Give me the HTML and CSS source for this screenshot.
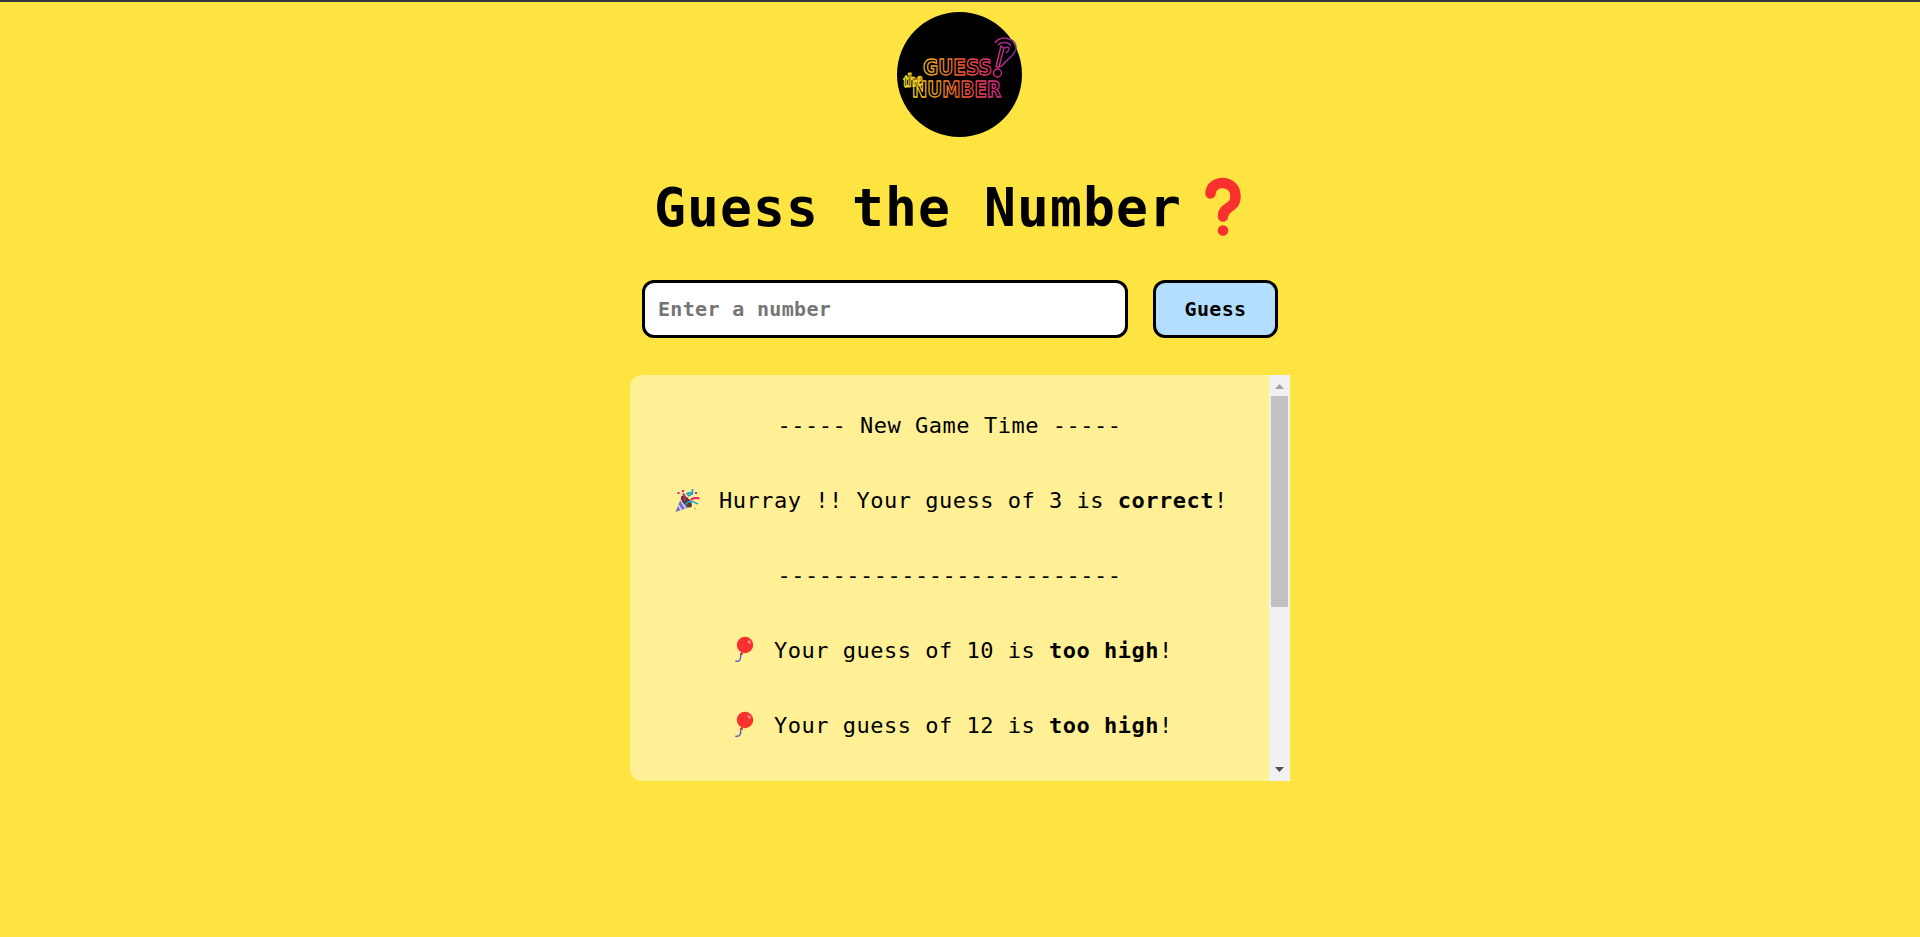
FILE: index.html
```html
<!DOCTYPE html>
<html lang="en">
<head>
<meta charset="utf-8">
<title>Guess the Number</title>
<link rel="stylesheet" href="styles.css">
</head>
<body>
<svg class="defs" width="0" height="0" aria-hidden="true">
  <symbol id="balloon" viewBox="0 0 34 28">
    <path d="M15 17.5C14.500 19 14.700 21 14.500 22.500C14.200 24.800 12 25.600 9.300 25.200" fill="none" stroke="#5b64c8" stroke-width="1.5"/>
    <path d="M16 15.5l-2.3 2.7 3.4.6z" fill="#d3202e"/>
    <circle cx="19" cy="9" r="8.2" fill="#f8312f"/>
    <ellipse cx="23.2" cy="6" rx="1.3" ry="2" transform="rotate(-35 23.2 6)" fill="#ff8a8c"/>
  </symbol>
</svg>
<main class="page">
  <svg class="logo" viewBox="0 0 125 125" role="img" aria-label="Guess the Number">
    <defs>
      <linearGradient id="neon" gradientUnits="userSpaceOnUse" x1="8" y1="0" x2="120" y2="0">
        <stop offset="0" stop-color="#f2e526"/>
        <stop offset=".22" stop-color="#eeaa1c"/>
        <stop offset=".5" stop-color="#ee582e"/>
        <stop offset=".8" stop-color="#dc2c80"/>
        <stop offset="1" stop-color="#7028a0"/>
      </linearGradient>
    </defs>
    <circle cx="62.5" cy="62.5" r="62.5" fill="#000"/>
    <g class="neon">
      <text class="neon-word" x="26" y="63" textLength="69" lengthAdjust="spacingAndGlyphs">GUESS</text>
      <text class="neon-word" x="15" y="84.500" textLength="89" lengthAdjust="spacingAndGlyphs">NUMBER</text>
      <text class="neon-the" x="7" y="75" textLength="19" lengthAdjust="spacingAndGlyphs" transform="rotate(-6 8 74)">the</text>
      <path d="M98 31C101 26 107 25 112 27C119 29 121 36 117 41C113 47 107 50 105 54L102 55L107 36L111 35C113 36 112 39 109 41M101 33C105 29 112 30 114 34M99 55L104 34L107 36M99 55L102 55"/>
      <circle cx="100.500" cy="61" r="4"/>
    </g>
  </svg>
  <h1 class="title"><span class="title-text">Guess the Number</span><svg class="title-mark" viewBox="0 0 82 60" aria-hidden="true">
    <path d="M28.500 16.500C29 2.500 53.500 1.500 53.500 19.500C53.500 32 41 29 41 39.500" fill="none" stroke="#f8312f" stroke-width="10.500" stroke-linecap="round" stroke-linejoin="round"/>
    <circle cx="41" cy="53.500" r="5.300" fill="#f8312f"/>
  </svg></h1>
  <form class="guess-form">
    <input class="guess-input" type="text" placeholder="Enter a number">
    <button class="guess-button" type="button">Guess</button>
  </form>
  <section class="log">
    <div class="log-list">
      <p class="entry">----- New Game Time -----</p>
      <p class="entry"><svg class="emoji" viewBox="0 0 34 28" aria-hidden="true">
        <path d="M11 9.500L4.500 26L20.500 20.500C19 15 15.500 11 11 9.500z" fill="#7b6bc0"/>
        <path d="M9.500 13.500L15 23M7.200 19L10.700 24.500" stroke="#d9cdf0" stroke-width="1.700"/>
        <ellipse cx="15.500" cy="15.500" rx="3.500" ry="7.300" transform="rotate(-41 15.500 15.500)" fill="#5d3a35"/>
        <path d="M12 7.500C14 9 14.500 12 13 14.500M20 14.500C21 11 25 12 28.500 12.500" fill="none" stroke="#e51a74" stroke-width="2"/>
        <path d="M15.500 8.500C17 6 21 6.500 19.500 9C18 10.500 16 9.500 18 8M21.500 3V7.500C21 9 19 8 20 6M14.500 19C17 14 22 15 27 18" fill="none" stroke="#16a6d0" stroke-width="1.700"/>
        <path d="M6.500 6h2v2h-2zM11 4h2v2h-2zM24 6h2v2h-2z" fill="#e51a74"/>
        <circle cx="24" cy="22.500" r="1" fill="#f5b04a"/>
      </svg> Hurray !! Your guess of 3 is <b>correct</b>!</p>
      <p class="entry">-------------------------</p>
      <p class="entry"><svg class="emoji" aria-hidden="true"><use href="#balloon"/></svg> Your guess of 10 is <b>too high</b>!</p>
      <p class="entry"><svg class="emoji" aria-hidden="true"><use href="#balloon"/></svg> Your guess of 12 is <b>too high</b>!</p>
    </div>
    <div class="scrollbar" aria-hidden="true">
      <svg class="arrow" viewBox="0 0 21 21"><path d="M6 14L10.500 9L15 14z" fill="#a3a3a3"/></svg>
      <div class="track"><div class="thumb"></div></div>
      <svg class="arrow" viewBox="0 0 21 21"><path d="M6 7L10.500 12L15 7z" fill="#505050"/></svg>
    </div>
  </section>
</main>
</body>
</html>
```
FILE: styles.css
```css
* { box-sizing: border-box; }

body {
  margin: 0;
  height: 937px;
  overflow: hidden;
  border-top: 2px solid #33343f;
  background: #fee440;
  color: #000;
  font-family: "DejaVu Sans Mono", monospace;
}

.defs { display: none; }

.page {
  display: flex;
  flex-direction: column;
  align-items: center;
  padding-top: 10px;
}

.logo { width: 125px; height: 125px; margin-right: 1px; }

.neon {
  fill: none;
  stroke: url(#neon);
  stroke-width: 1.4;
}
.neon-word { font: bold 21px "DejaVu Sans", sans-serif; }
.neon-the { font: italic bold 19px "Liberation Serif", serif; }

.title {
  display: flex;
  align-items: flex-start;
  height: 70px;
  margin: 36px 2px 0 0;
  font-size: 53px;
  line-height: 70px;
  font-weight: 700;
}
.title-text {
  width: 528px;
  letter-spacing: 1.09px;
  white-space: nowrap;
}
.title-mark { width: 82px; height: 60px; margin-top: 4px; }

.guess-form {
  display: flex;
  gap: 25px;
  margin-top: 37px;
}
.guess-input,
.guess-button {
  height: 58px;
  border: 3px solid #000;
  border-radius: 12px;
  font: bold 20px "DejaVu Sans Mono", monospace;
  letter-spacing: 0.33px;
}
.guess-input {
  width: 486px;
  padding: 0 13px;
  background: #fff;
}
.guess-input::placeholder { color: #757575; }
.guess-button {
  width: 125px;
  padding: 0;
  background: #b3deff;
  color: #000;
}

.log {
  display: flex;
  width: 660px;
  height: 406px;
  margin-top: 37px;
}
.log-list {
  flex: 1;
  overflow: hidden;
  padding-top: 13px;
  border-radius: 12px 0 0 12px;
  background: #fff095;
}
.entry {
  height: 75px;
  margin: 0;
  font-size: 22px;
  line-height: 75px;
  letter-spacing: 0.506px;
  text-align: center;
  white-space: nowrap;
}
.emoji { width: 34px; height: 28px; vertical-align: -6px; }

.scrollbar {
  display: flex;
  flex-direction: column;
  width: 21px;
  background: #f1f1f1;
}
.arrow { width: 21px; height: 21px; }
.track { flex: 1; padding: 0 2px; }
.thumb { height: 211px; background: #c1c1c1; }
```
